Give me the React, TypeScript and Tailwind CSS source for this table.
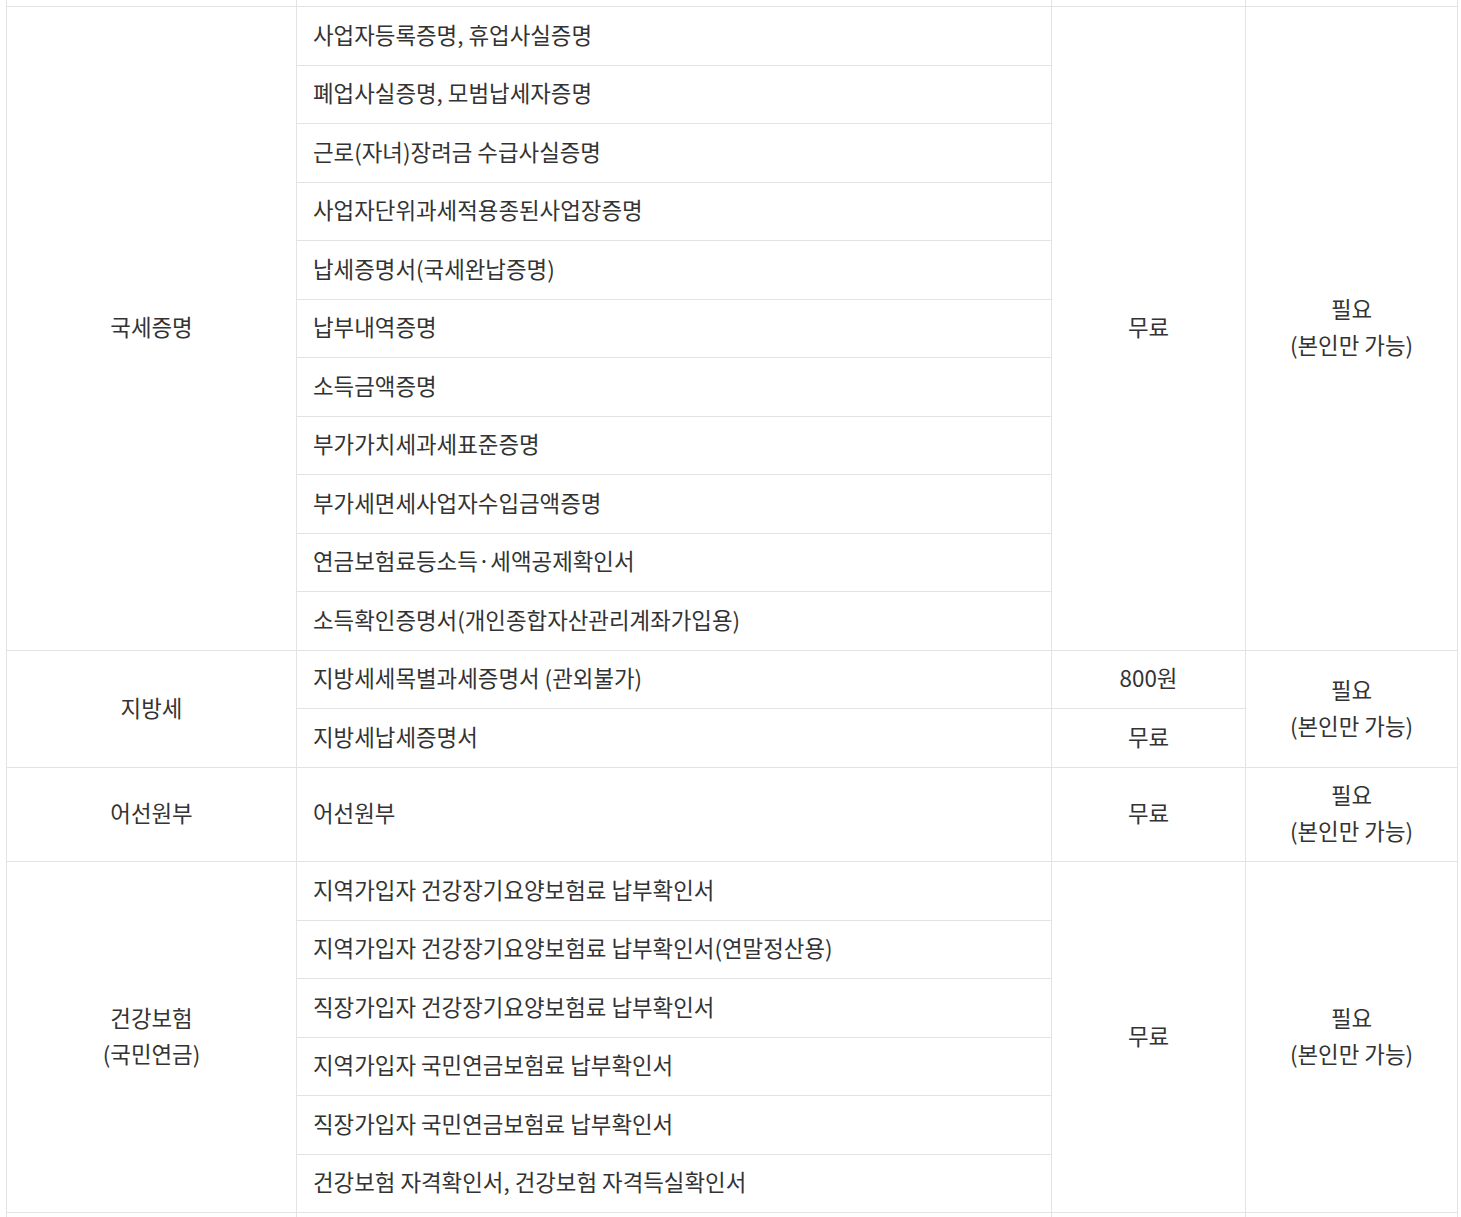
import React from "react";

const font = { fontFamily: '"Noto Sans CJK KR", "Noto Sans", sans-serif' };

const cat = "border border-[#e3e3e3] text-center align-middle px-4 pt-[8.75px] pb-[12.75px] leading-[36px]";
const item = "border border-[#e3e3e3] text-left align-middle pl-4 pr-4 pt-[8.75px] pb-[12.75px] leading-[36px] h-[58.5px]";

function Req() {
  return (
    <>
      필요
      <br />
      (본인만 가능)
    </>
  );
}

export default function App() {
  const nat = [
    "사업자등록증명, 휴업사실증명",
    "폐업사실증명, 모범납세자증명",
    "근로(자녀)장려금 수급사실증명",
    "사업자단위과세적용종된사업장증명",
    "납세증명서(국세완납증명)",
    "납부내역증명",
    "소득금액증명",
    "부가가치세과세표준증명",
    "부가세면세사업자수입금액증명",
    "연금보험료등소득·세액공제확인서",
    "소득확인증명서(개인종합자산관리계좌가입용)",
  ];
  const health = [
    "지역가입자 건강장기요양보험료 납부확인서",
    "지역가입자 건강장기요양보험료 납부확인서(연말정산용)",
    "직장가입자 건강장기요양보험료 납부확인서",
    "지역가입자 국민연금보험료 납부확인서",
    "직장가입자 국민연금보험료 납부확인서",
    "건강보험 자격확인서, 건강보험 자격득실확인서",
  ];
  return (
    <div className="h-[1217px] w-[1461px] overflow-hidden bg-white" style={font}>
      <table className="ml-[6px] mt-[-2px] w-[1452px] table-fixed border-collapse text-[22.4px] text-[#333]">
        <colgroup>
          <col className="w-[290px]" />
          <col className="w-[755px]" />
          <col className="w-[194px]" />
          <col className="w-[212px]" />
        </colgroup>
        <tbody>
          <tr className="h-[8px]">
            <td className="border border-[#e3e3e3]"></td>
            <td className="border border-[#e3e3e3]"></td>
            <td className="border border-[#e3e3e3]"></td>
            <td className="border border-[#e3e3e3]"></td>
          </tr>
          {nat.map((t, i) => (
            <tr key={t}>
              {i === 0 && (
                <td rowSpan={nat.length} className={cat}>
                  국세증명
                </td>
              )}
              <td className={item}>{t}</td>
              {i === 0 && (
                <>
                  <td rowSpan={nat.length} className={cat}>
                    무료
                  </td>
                  <td rowSpan={nat.length} className={cat}>
                    <Req />
                  </td>
                </>
              )}
            </tr>
          ))}
          <tr>
            <td rowSpan={2} className={cat}>
              지방세
            </td>
            <td className={item}>지방세세목별과세증명서 (관외불가)</td>
            <td className={cat}>800원</td>
            <td rowSpan={2} className={cat}>
              <Req />
            </td>
          </tr>
          <tr>
            <td className={item}>지방세납세증명서</td>
            <td className={cat}>무료</td>
          </tr>
          <tr>
            <td className={cat}>어선원부</td>
            <td className={item}>어선원부</td>
            <td className={cat}>무료</td>
            <td className={cat}>
              <Req />
            </td>
          </tr>
          {health.map((t, i) => (
            <tr key={t}>
              {i === 0 && (
                <td rowSpan={health.length} className={cat}>
                  건강보험
                  <br />
                  (국민연금)
                </td>
              )}
              <td className={item}>{t}</td>
              {i === 0 && (
                <>
                  <td rowSpan={health.length} className={cat}>
                    무료
                  </td>
                  <td rowSpan={health.length} className={cat}>
                    <Req />
                  </td>
                </>
              )}
            </tr>
          ))}
          <tr>
            <td className={cat}>&nbsp;</td>
            <td className={item}>&nbsp;</td>
            <td className={cat}>&nbsp;</td>
            <td className={cat}>&nbsp;</td>
          </tr>
        </tbody>
      </table>
    </div>
  );
}
